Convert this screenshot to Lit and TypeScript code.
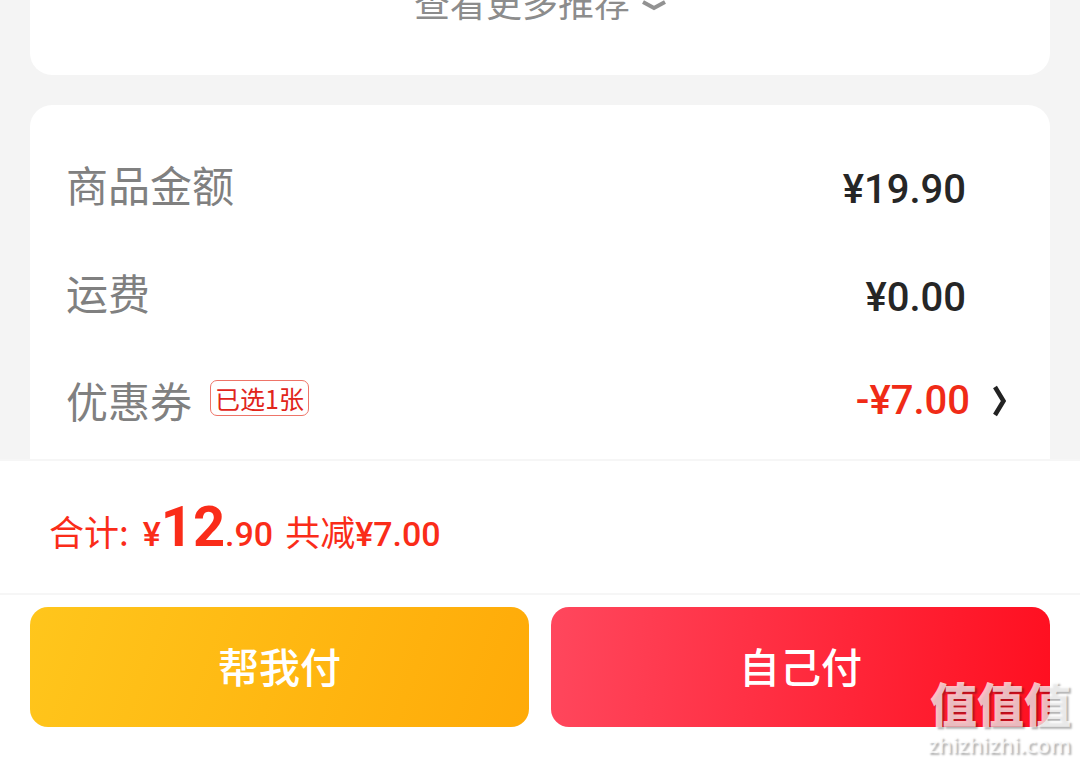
import { LitElement, html, css } from "lit";
import { customElement } from "lit/decorators.js";

@customElement("app-root")
export class AppRoot extends LitElement {
  static styles = css`
    :host {
      display: flex;
      flex-direction: column;
      height: 100vh;
      position: relative;
      overflow: hidden;
      background: #f4f4f4;
      font-family: "Noto Sans CJK SC", sans-serif;
      color: #808080;
    }
    * {
      box-sizing: border-box;
    }
    main {
      flex: 1;
      min-height: 0;
      display: flex;
      flex-direction: column;
      justify-content: flex-end;
      gap: 30px;
      padding: 0 30px;
    }
    .card {
      background: #fff;
      border-radius: 22px;
    }
    .recommend {
      display: flex;
      justify-content: center;
      padding: 30px 0 48px;
    }
    .more {
      display: flex;
      align-items: center;
      gap: 12px;
      color: #8c8c8c;
      font-size: 36px;
      line-height: 52px;
      text-decoration: none;
    }
    .down {
      width: 24px;
      height: 12px;
      margin-top: 10px;
    }
    .bill {
      border-radius: 22px 22px 0 0;
      padding: 28px 36px 2px;
      margin: 0;
    }
    .row {
      display: flex;
      align-items: center;
      height: 108px;
      font-size: 42px;
      line-height: 60px;
    }
    dt,
    dd {
      margin: 0;
    }
    dt {
      display: flex;
      align-items: center;
      gap: 18px;
      padding-bottom: 6px;
    }
    dd {
      margin-left: auto;
      padding: 6px 48px 0 0;
    }
    .num {
      font-family: Roboto, sans-serif;
      font-size: 40px;
      font-weight: 500;
      color: #262626;
    }
    .coupon dd {
      padding: 0;
    }
    .tag {
      padding: 0 4px;
      margin-bottom: 4px;
      border: 1px solid #ee7468;
      border-radius: 7px;
      color: #e1251b;
      font-size: 25px;
      line-height: 34px;
    }
    .pick {
      display: flex;
      align-items: center;
      gap: 22px;
      padding: 0 8px 4px 0;
      border: 0;
      background: none;
      line-height: 60px;
      color: #f02b17;
    }
    .right {
      width: 14px;
      height: 32px;
    }
    footer {
      background: #fff;
      border-top: 2px solid #f6f6f6;
    }
    .total {
      display: flex;
      align-items: baseline;
      margin: 0;
      padding: 26px 49px 19px;
      color: #fa2c19;
      font-size: 35px;
      line-height: 80px;
      white-space: nowrap;
      border-bottom: 2px solid #f6f6f6;
    }
    .total .num {
      color: inherit;
      font-size: 34px;
    }
    .total .sum {
      margin: 0 12px 0 14px;
    }
    .sum .big {
      font-size: 56px;
      font-weight: 700;
    }
    .actions {
      display: grid;
      grid-template-columns: 1fr 1fr;
      gap: 22px;
      padding: 12px 30px 36px;
    }
    .pay {
      height: 120px;
      padding: 0 0 4px;
      border: 0;
      border-radius: 18px;
      font: 500 41px/60px "Noto Sans CJK SC", sans-serif;
      color: #fff;
    }
    .friend {
      background: linear-gradient(110deg, #ffc61c, #ffaa08);
    }
    .self {
      background: linear-gradient(95deg, #ff475d, #ff0f20);
    }
    .mark {
      position: absolute;
      right: 9px;
      bottom: 4px;
      text-align: right;
      color: rgba(255, 255, 255, 0.72);
      text-shadow: 2px 2px 2px rgba(0, 0, 0, 0.3);
      pointer-events: none;
    }
    .mark-name {
      font-size: 47px;
      font-weight: 900;
      line-height: 54px;
    }
    .mark-site {
      font-family: "Open Sans", sans-serif;
      font-size: 22px;
      font-weight: 600;
      line-height: 30px;
    }
  `;

  render() {
    return html`
      <main>
        <section class="card recommend">
          <a class="more" href="#more">
            查看更多推荐
            <svg class="down" viewBox="0 0 24 12" fill="none" aria-hidden="true">
              <path d="M1 2 12 8 23 2" stroke="#929292" stroke-width="4" />
            </svg>
          </a>
        </section>
        <dl class="card bill">
          <div class="row">
            <dt>商品金额</dt>
            <dd class="num">¥19.90</dd>
          </div>
          <div class="row">
            <dt>运费</dt>
            <dd class="num">¥0.00</dd>
          </div>
          <div class="row coupon">
            <dt>优惠券<span class="tag">已选1张</span></dt>
            <dd>
              <button class="num pick" type="button">
                -¥7.00
                <svg class="right" viewBox="0 0 14 32" fill="none" aria-hidden="true">
                  <path d="M3 2 11.5 16 3 30" stroke="#222" stroke-width="4.5" />
                </svg>
              </button>
            </dd>
          </div>
        </dl>
      </main>
      <footer>
        <p class="total">
          <span>合计:</span>
          <span class="num sum">¥<span class="big">12</span>.90</span>
          <span>共减<span class="num">¥7.00</span></span>
        </p>
        <div class="actions">
          <button class="pay friend" type="button">帮我付</button>
          <button class="pay self" type="button">自己付</button>
        </div>
      </footer>
      <div class="mark">
        <div class="mark-name">值值值</div>
        <div class="mark-site">zhizhizhi.com</div>
      </div>
    `;
  }
}
